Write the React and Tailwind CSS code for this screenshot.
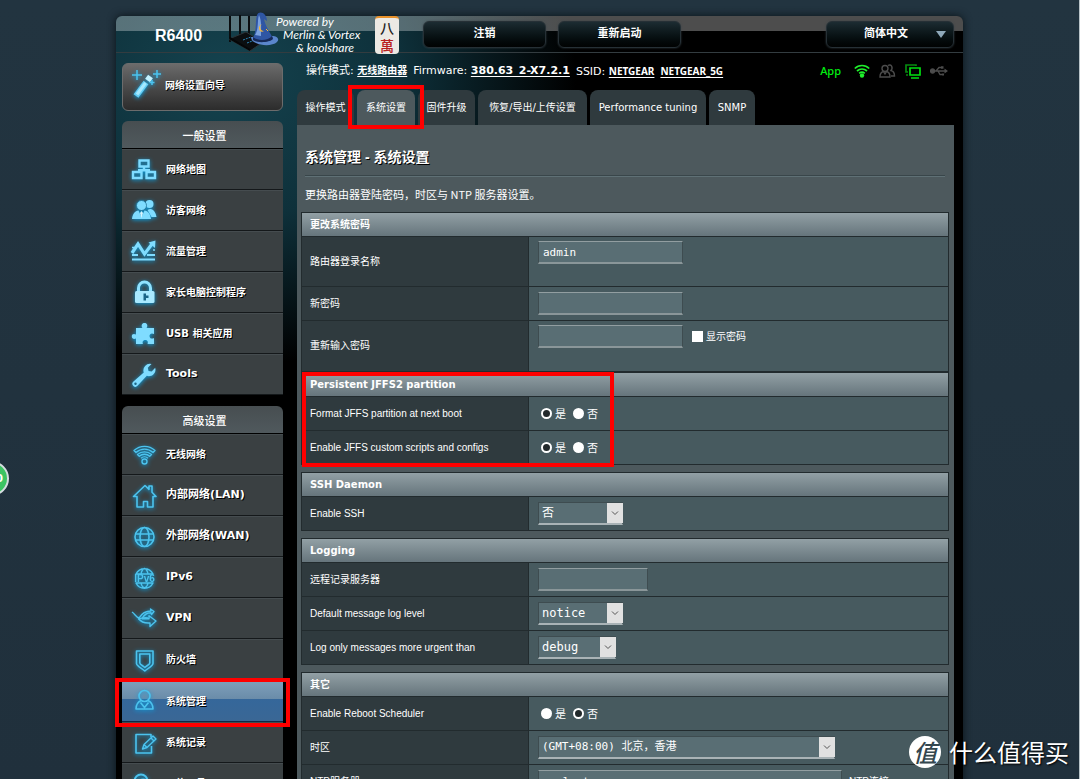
import React, { useState } from 'react';

const iconProps = {
    viewBox: '0 0 28 28',
    fill: 'none',
    stroke: '#4cc3ee',
    strokeWidth: 1.6,
    strokeLinejoin: 'round',
    className: 'w-7 h-7 shrink-0 drop-shadow-[0_1px_2px_#0a9fe0]',
    'aria-hidden': true,
};

const icons = {
    map: (
        <svg {...iconProps} strokeWidth="2.4" stroke="#7fdcff" strokeLinejoin="miter">
            <path d="M9.500 4.500h9v6h-9zM3 16h8.500v6H3zM16.500 16H25v6h-8.500zM8 14.200h12M14 11v3" />
        </svg>
    ),
    guest: (
        <svg {...iconProps} fill="#7fdcff" stroke="none">
            <circle cx="19.500" cy="7" r="4" />
            <path d="M17.500 13c5-3 8 2 9 7h-5z" />
            <circle cx="11.500" cy="8.500" r="5" stroke="#1f6f93" strokeWidth=".8" />
            <path d="M2 22c.500-5 3-8 6.500-8.500L11.500 20l3-6.500C18 14 20.500 17 21 22z" />
            <path d="M11.500 14l1.500 2-1.500 5-1.500-5z" fill="#d9f6ff" />
        </svg>
    ),
    traffic: (
        <svg {...iconProps} stroke="#7fdcff" strokeLinejoin="miter">
            <path d="M2 15l6-9 6.500 10L22 6" strokeWidth="3.200" />
            <path d="M18.500 4.500l7-2-.5 7.500z" fill="#7fdcff" stroke="none" />
            <path d="M2 17h6M17 17h8M2 21.500h23" strokeWidth="1.800" />
            <path d="M2 9.500h2M23 12h2" strokeWidth="1.400" />
        </svg>
    ),
    lock: (
        <svg {...iconProps} stroke="#8fe2ff">
            <path d="M8.500 13V9a6 6 0 0 1 12 0v4" strokeWidth="3" />
            <rect x="5" y="12" width="19.500" height="12" rx="1.500" fill="#a8e9ff" stroke="none" />
            <path d="M13.500 14.500h2.500v7h-2.500zM16 16.500h2.500v2.500H16z" fill="#1b6688" stroke="none" />
        </svg>
    ),
    puzzle: (
        <svg {...iconProps} fill="#7fdcff" stroke="none">
            <path d="M6 8h6.500c-1.600-2.200-.8-5 2-5s3.600 2.800 2 5H24v6c-2.300-1.300-4.500-.3-4.500 2s2.200 3.300 4.500 2v6h-6.500c1-2.400-.2-4-2.200-4s-3.400 1.600-2.300 4H6v-5.500c-2 1-4.200.2-4.200-2.200S4 13.500 6 14.600z" />
        </svg>
    ),
    wrench: (
        <svg {...iconProps} fill="#7fdcff" stroke="none">
            <path d="M25.500 8.500a6.500 6.500 0 0 1-8.700 6.300L7.500 24.800a2.900 2.900 0 0 1-4.300-4L13.800 11.500A6.500 6.500 0 0 1 21.500 3l-3.700 3.700.7 3.200 3.200.7L25.200 6.800z" />
            <circle cx="5.500" cy="22.700" r="1.200" fill="#1b6688" />
        </svg>
    ),
    wifi: (
        <svg {...iconProps} strokeWidth="1.400">
            <path d="M4 9.500c6-5.500 15-5.500 21 0l-2 2c-5-4.500-12-4.500-17 0zM7.500 13.500c4-3.500 10-3.500 14 0l-1.800 1.800c-3-2.700-7.400-2.700-10.400 0zM11 17.200c2-1.800 5-1.800 7 0" />
            <circle cx="14.500" cy="20.500" r="2.500" />
        </svg>
    ),
    house: (
        <svg {...iconProps}>
            <path d="M3.500 14.500L15 3.500l4 3.800V4h3v6.200l4 4.300h-3V25h-5.500v-5.500h-4V25H7V14.500z" />
        </svg>
    ),
    globe: (
        <svg {...iconProps}>
            <circle cx="14.500" cy="14" r="9.500" />
            <ellipse cx="14.500" cy="14" rx="4.500" ry="9.500" />
            <path d="M5.500 11h18M5.500 17h18" />
        </svg>
    ),
    ipv6: (
        <svg {...iconProps} strokeWidth="1.400">
            <path d="M6 10a9.500 9.500 0 0 1 17 0zM6 19a9.500 9.500 0 0 0 17 0zM11 10c.5-3 2-5 3.500-5.500 1.500.5 3 2.500 3.500 5.500M11 19c.5 3 2 4.500 3.500 5 1.500-.5 3-2 3.500-5" />
            <text x="14.500" y="18" textAnchor="middle" fontSize="10" fontFamily="Liberation Sans" fontWeight="700" fill="#4cc3ee" stroke="none">
                IPv6
            </text>
        </svg>
    ),
    vpn: (
        <svg {...iconProps} strokeWidth="1.400">
            <path d="M2 7c3 2 4 5 7 6 3-5 7-7 12-7l-.5-2 3.500 2.500-2.500 3-.500-1.800c-4 0-7 2-9 6h7v-3l7 5.300-6 5.500v-3.500c-6 .5-9-1-11.500-4.500" />
            <path d="M8 14c4-1 7-2 10-1" />
        </svg>
    ),
    shield: (
        <svg {...iconProps}>
            <path d="M6.500 5h16.500v12.500c0 2.500-5 4.500-8.200 7.500-3.300-3-8.300-5-8.300-7.500z" />
            <path d="M9.800 8h10v9c0 1.500-3 2.500-5 4.500-2-2-5-3-5-4.500z" />
        </svg>
    ),
    admin: (
        <svg {...iconProps}>
            <circle cx="14.500" cy="9" r="5.500" />
            <path d="M11 13.500c-3 1.500-5 4.500-5 8.500h17c0-4-2-7-5-8.500M10.500 15.500l4 5 4-5" />
        </svg>
    ),
    log: (
        <svg {...iconProps}>
            <path d="M21 8V5.500H6v18.500h15.500V17" />
            <path d="M12.500 20l1.500-4.500L23 7l3 3-9 8.500zM21 9l3 3M14 15.500l3 3" strokeWidth="1.400" />
        </svg>
    ),
    tools: (
        <svg {...iconProps} strokeWidth="2">
            <circle cx="11" cy="11" r="6.500" />
            <path d="M7 13c2-3 5-4 9-3M16 16l8 8" />
        </svg>
    ),
};

const generalMenu = [
    { icon: 'map', label: '网络地图' },
    { icon: 'guest', label: '访客网络' },
    { icon: 'traffic', label: '流量管理' },
    { icon: 'lock', label: '家长电脑控制程序' },
    { icon: 'puzzle', label: 'USB 相关应用' },
    { icon: 'wrench', label: 'Tools', large: true },
];

const advancedMenu = [
    { icon: 'wifi', label: '无线网络' },
    { icon: 'house', label: '内部网络(LAN)', large: true },
    { icon: 'globe', label: '外部网络(WAN)', large: true },
    { icon: 'ipv6', label: 'IPv6', large: true },
    { icon: 'vpn', label: 'VPN', large: true },
    { icon: 'shield', label: '防火墙' },
    { icon: 'admin', label: '系统管理', active: true },
    { icon: 'log', label: '系统记录' },
    { icon: 'tools', label: '网络工具' },
];

const tabs = [
    { label: '操作模式', width: 'w-[57px]' },
    { label: '系统设置', width: 'w-[58px]', active: true },
    { label: '固件升级', width: 'w-[57px]' },
    { label: '恢复/导出/上传设置', width: 'w-[109px]' },
    { label: 'Performance tuning', width: 'w-[116px]' },
    { label: 'SNMP', width: 'w-[46px]' },
];

const Menu = ({ title, items }) => (
    <nav className="mb-[11px]">
        <h2 className="h-7 pt-1 pl-1 text-center text-[11px] leading-6 font-medium text-white rounded-t-md bg-gradient-to-b from-[#474e51] to-[#50595d] border-b border-black">
            {title}
        </h2>
        <ul>
            {items.map((item) => (
                <li key={item.label} className={item.active ? 'relative mt-px' : ''}>
                    <a
                        href="#"
                        className={`flex items-center gap-2 h-[41px] pl-2 font-bold text-white border-b ${item.large ? 'text-[11px]' : 'text-[10px]'} ${
                            item.active
                                ? 'border-[#0d2a45] bg-[linear-gradient(#7fa0bb,#6a8ca9_45%,#35679a_46%,#3a6795)]'
                                : 'border-[#14181a] border-t border-t-[#454c4f] bg-[#3a4042]'
                        }`}
                    >
                        {icons[item.icon]}
                        <span className="[text-shadow:1px_1px_0_#000]">{item.label}</span>
                    </a>
                    {item.active && <div className="absolute z-10 -inset-x-[7px] -top-[3px] -bottom-[5px] border-4 border-[#f00] pointer-events-none" />}
                </li>
            ))}
        </ul>
    </nav>
);

const Section = ({ title, children, className = '' }) => (
    <table className={`w-full table-fixed border-separate border-spacing-0 border-t border-l border-[#222b2e] ${className}`}>
        <colgroup>
            <col className="w-[227px]" />
            <col />
        </colgroup>
        <thead>
            <tr>
                <th
                    colSpan={2}
                    className="h-6 pl-2 text-left font-['DejaVu_Sans','Noto_Sans_CJK_SC',sans-serif] text-[10px] leading-4 font-bold text-white border-b border-r border-[#222b2e] bg-gradient-to-b from-[#92a0a5] to-[#66757c]"
                >
                    {title}
                </th>
            </tr>
        </thead>
        <tbody>{children}</tbody>
    </table>
);

const Row = ({ label, htmlFor, height = 'h-[34px]', align = 'align-middle', children }) => (
    <tr>
        <th
            scope="row"
            className={`${height} pl-2 text-left text-[10px] leading-4 font-normal text-white border-b border-r border-[#222b2e] bg-[#2f3a3e]`}
        >
            {htmlFor ? <label htmlFor={htmlFor}>{label}</label> : label}
        </th>
        <td className={`${align} py-1 pl-[9px] border-b border-r border-[#222b2e] bg-[#475a5f]`}>
            <div className="flex items-center">{children}</div>
        </td>
    </tr>
);

const TextInput = ({ width = 'w-[145px]', ...props }) => (
    <input
        {...props}
        className={`${width} h-[23px] pl-1 font-['DejaVu_Sans_Mono',monospace] text-[11px] text-white bg-[#596e74] border border-[#3e4c50] border-t-[#929ea1] border-b-2 border-b-[#8a9699] outline-none`}
    />
);

const Select = ({ id, value, width, size = 'text-[12px]' }) => (
    <div className={`relative ${width}`}>
        <select
            id={id}
            defaultValue={value}
            className={`block w-full h-[23px] pl-[3px] appearance-none font-['DejaVu_Sans_Mono','Noto_Sans_CJK_SC',monospace] ${size} leading-4 text-white bg-[#596e74] border border-[#3e4c50] border-b-2 border-b-[#a9b3b6] outline-none`}
        >
            <option>{value}</option>
        </select>
        <span className="absolute right-0 top-px flex items-center justify-center w-4 h-5 bg-[#e1e1e1] pointer-events-none">
            <svg viewBox="0 0 8 8" className="w-2 h-2" fill="none" stroke="#555">
                <path d="M1 2.500l3 3 3-3" />
            </svg>
        </span>
    </div>
);

const YesNo = ({ name, initial }) => {
    const [value, setValue] = useState(initial);

    return ['是', '否'].map((option) => (
        <label key={option} className="flex items-center gap-[3px] ml-[3px] mr-1 text-[11px] leading-4 text-white">
            <input
                type="radio"
                name={name}
                checked={value === option}
                onChange={() => setValue(option)}
                className="appearance-none w-[11px] h-[11px] rounded-full bg-white checked:bg-[#22292b] checked:border-2 checked:border-white"
            />
            {option}
        </label>
    ));
};

const RouterLogo = () => (
    <svg viewBox="0 0 52 40" className="w-[52px] h-10" aria-hidden="true">
        <g stroke="#0a0d0f" strokeWidth="2">
            <path d="M2 4v26M12 3v22M21 4v18" />
        </g>
        <path d="M1 27l17-7 17 10-13 9z" fill="#0b0e10" stroke="#2c3438" />
        <path d="M1 27l21 12v-2L2 25z" fill="#050607" />
        <path d="M15 28l8-3M19 31l8-3" stroke="#2d86b8" strokeDasharray="2 1" />
        <path d="M23 25c0 3 2 5 5 6 6 3 17 3 21-1 3-3 0-6-5-6z" fill="#5b86cc" />
        <path d="M25 26c4-7 2-17 4-23 1-3 4-3 6-2 3 2 4 5 4 8l-3-2c1 6 5 12 9 19-3 5-16 5-20 0z" fill="#2f56a4" />
        <path d="M27 23c4-6 2-14 4-20 3 6 2 15 2 21z" fill="#7ba2e0" />
        <path d="M25 25c4 4 15 4 19-1l1 3c-4 4-17 4-20 1z" fill="#172a58" />
        <path d="M34 12c-3 2-2 7 2 7-4 3-8-4-2-7z" fill="#f0b73f" />
        <path d="M38 17l2 2" stroke="#f0b73f" />
    </svg>
);

const WandIcon = () => (
    <svg viewBox="0 0 34 32" className="w-[34px] h-8 shrink-0 drop-shadow-[0_1px_2px_#0a9fe0]" fill="none" aria-hidden="true">
        <path d="M5 27L15 13.500" stroke="#63cdf5" strokeWidth="6" />
        <path d="M6 25.500L14.500 14" stroke="#a5e9ff" strokeWidth="3" />
        <path d="M16.500 11.500l3-4" stroke="#c4f2ff" strokeWidth="6" />
        <path d="M6 1v10M1 6h10M26 1v8M22 5h8M21 11v5M18.500 13.500h5" stroke="#4cc3ee" strokeWidth="1.500" />
    </svg>
);

const StatusIcons = () => (
    <div className="flex items-center gap-[9px]">
        <a href="#" className="mr-1 text-[11px] leading-4 font-['Noto_Sans',sans-serif] font-medium text-[#00f010]">App</a>
        <svg viewBox="0 0 16 14" className="w-4 h-[14px]" fill="none" stroke="#1ff02c" strokeWidth="1.700">
            <path d="M.8 4.500c4-4 10.400-4 14.400 0M3 7c3-2.700 7-2.700 10 0M5.200 9.300c1.800-1.500 3.800-1.500 5.600 0" />
            <circle cx="8" cy="11.500" r="2.200" fill="#1ff02c" stroke="none" />
        </svg>
        <svg viewBox="0 0 17 14" className="w-[17px] h-[14px]" fill="none" stroke="#4c4c4c" strokeWidth="1.400">
            <circle cx="6" cy="4.500" r="3" />
            <path d="M1 13c0-3 1.500-5 3.500-5.500L6 10l1.500-2.500C9.500 8 11 10 11 13zM9 1.500c3-2 5.500 2 3 5 2 .5 3.500 3 3.500 5.500H12" />
        </svg>
        <svg viewBox="0 0 16 15" className="w-4 h-[15px]" fill="none" stroke="#00e010" strokeWidth="1.700">
            <path d="M11 2V1H1v7h2M1 11h2" stroke="#078a10" />
            <path d="M5 4h10v7H5zM6 14h8" />
        </svg>
        <svg viewBox="0 0 18 12" className="w-[18px] h-3" fill="none" stroke="#4c4c4c" strokeWidth="1.300">
            <path d="M3 6h12M6 6l3-3.500h2M8 6l2 3.500h2" />
            <circle cx="2.500" cy="6" r="2" fill="#4c4c4c" />
            <path d="M14.500 3.500v5L18 6zM11 1.200h2.500v2.500H11zM12 8.500h2v2h-2z" fill="#4c4c4c" stroke="none" />
        </svg>
    </div>
);

const headerButton =
    'h-[27px] rounded-md border border-[#263036] bg-gradient-to-b from-[#1c2c32] to-[#010303] text-center text-[11px] font-bold text-white shadow-[0_0_2px_#39454a]';

const App = () => {
    const [showPassword, setShowPassword] = useState(false);

    return (
        <div className="relative h-screen overflow-hidden border-r border-[#b9c4c9] bg-gradient-to-b from-[#223440] to-[#20303c] pt-4 font-['DejaVu_Sans','Noto_Sans_CJK_SC',sans-serif]">
            <div className="mx-auto max-w-[847px] min-h-screen rounded-t-md bg-black bg-[radial-gradient(ellipse_350px_290px_at_110px_60px,#15434f_0%,#0e303a_50%,transparent_100%)] bg-no-repeat shadow-[0_0_8px_#0a1216]">
                <header className="flex items-start h-[37px] border-b border-[#333c40] rounded-t-md bg-[linear-gradient(#ffffff4d,#ffffff4d)] bg-[length:100%_15px] bg-no-repeat">
                    <h1 className="w-[112px] pt-2 pl-[39px] text-[16px] leading-6 font-bold text-white font-['Liberation_Sans',sans-serif]">R6400</h1>
                    <div className="-mt-1">
                        <RouterLogo />
                    </div>
                    <p className="w-[92px] -ml-1 -mt-px text-[12px] leading-[13px] italic text-white font-['Lato',sans-serif] whitespace-nowrap">
                        <span className="block">Powered by</span>
                        <span className="block pl-[7px]">Merlin &amp; Vortex</span>
                        <span className="block pl-5">&amp; koolshare</span>
                    </p>
                    <div className="flex flex-col items-center w-6 h-[38px] ml-[7px] rounded-sm bg-[#ece9e4] border-t-2 border-[#e8912a] text-[14px] leading-[18px] font-medium font-['Noto_Sans_CJK_SC',sans-serif]">
                        <span className="text-[#222]">八</span>
                        <span className="text-[#b8201c]">萬</span>
                    </div>
                    <button type="button" className={`${headerButton} mt-[5px] ml-6 w-[123px]`}>注销</button>
                    <button type="button" className={`${headerButton} mt-[5px] ml-3 w-[123px]`}>重新启动</button>
                    <div className="relative mt-[5px] ml-auto mr-[9px]">
                        <select aria-label="语言" className={`${headerButton} block w-[128px] appearance-none [text-align-last:center] pr-2`}>
                            <option>简体中文</option>
                        </select>
                        <span className="absolute right-2 top-[10px] border-x-[5px] border-t-[7px] border-x-transparent border-t-[#8fa9ba] pointer-events-none" />
                    </div>
                </header>

                <div className="flex">
                    <aside className="w-[161px] ml-[6px] mr-[14px] mt-[10px] shrink-0">
                        <button
                            type="button"
                            className="flex items-center w-full h-12 mb-[10px] pl-2 pb-1 rounded-md border border-[#6c6c6c] bg-gradient-to-b from-[#6b6b6b] to-[#2c2c2c] text-[10px] font-bold text-white"
                        >
                            <WandIcon />
                            <span className="[text-shadow:1px_1px_0_#000]">网络设置向导</span>
                        </button>
                        <Menu title="一般设置" items={generalMenu} />
                        <Menu title="高级设置" items={advancedMenu} />
                    </aside>

                    <main className="flex-1 min-w-0 mr-[9px]">
                        <div className="flex items-center justify-between h-9 pl-[9px] pr-[6px]">
                            <p className="flex items-center gap-[6px] text-[11px] leading-4 text-white whitespace-nowrap">
                                <span>操作模式: <a href="#" className="text-[10px] font-bold underline underline-offset-2">无线路由器</a></span>
                                <span>Firmware: <a href="#" className="font-bold underline underline-offset-2">380.63_2-X7.2.1</a></span>
                                <span>SSID: <b className="font-['Noto_Sans',sans-serif] text-[10px] underline underline-offset-2">NETGEAR</b></span>
                                <b className="font-['Noto_Sans',sans-serif] text-[10px] underline underline-offset-2">NETGEAR_5G</b>
                            </p>
                            <StatusIcons />
                        </div>

                        <div className="flex gap-[3px] pt-px">
                            {tabs.map((tab) => (
                                <div key={tab.label} className="relative">
                                    <a
                                        href="#"
                                        className={`flex items-center justify-center h-[35px] rounded-t-lg text-[10px] text-white whitespace-nowrap ${tab.width} ${tab.active ? 'bg-[#4d595d]' : 'bg-[#2f3a3e]'}`}
                                    >
                                        {tab.label}
                                    </a>
                                    {tab.active && <div className="absolute z-10 -inset-x-[9px] -top-[5px] -bottom-1 border-4 border-[#f00] pointer-events-none" />}
                                </div>
                            ))}
                        </div>

                        <div className="min-h-screen bg-[#4d595d] px-[5px] pt-5 pl-1 text-white">
                            <h2 className="mx-1 pb-[6px] text-[14px] leading-6 font-bold font-['Liberation_Sans','Noto_Sans_CJK_SC',sans-serif] border-b border-[#39464a] shadow-[0_1px_0_#5f7075] [text-shadow:1px_1px_0_#000]">
                                系统管理 - 系统设置
                            </h2>
                            <p className="mx-1 pt-[6px] pb-[6px] text-[11px] leading-6 font-['Noto_Sans_CJK_SC',sans-serif]">
                                更换路由器登陆密码，时区与 NTP 服务器设置。
                            </p>

                            <form className="font-['Liberation_Sans','Noto_Sans_CJK_SC',sans-serif]" onSubmit={(e) => e.preventDefault()}>
                                <Section title="更改系统密码">
                                    <Row label="路由器登录名称" htmlFor="username" height="h-[50px]" align="align-top">
                                        <TextInput id="username" type="text" defaultValue="admin" />
                                    </Row>
                                    <Row label="新密码" htmlFor="password">
                                        <TextInput id="password" type={showPassword ? 'text' : 'password'} />
                                    </Row>
                                    <Row label="重新输入密码" htmlFor="password2" height="h-[51px]" align="align-top">
                                        <TextInput id="password2" type={showPassword ? 'text' : 'password'} />
                                        <label className="flex items-center gap-[3px] ml-[9px] text-[10px] leading-4">
                                            <input
                                                type="checkbox"
                                                checked={showPassword}
                                                onChange={(e) => setShowPassword(e.target.checked)}
                                                className="appearance-none w-[11px] h-[11px] bg-white checked:bg-[#7a8f96] border border-white"
                                            />
                                            显示密码
                                        </label>
                                    </Row>
                                </Section>

                                <div className="relative">
                                    <Section title="Persistent JFFS2 partition">
                                        <Row label="Format JFFS partition at next boot">
                                            <YesNo name="jffs_format" initial="是" />
                                        </Row>
                                        <Row label="Enable JFFS custom scripts and configs">
                                            <YesNo name="jffs_scripts" initial="是" />
                                        </Row>
                                    </Section>
                                    <div className="absolute left-px top-0 -bottom-[2px] w-[312px] border-4 border-[#f00] pointer-events-none" />
                                </div>

                                <Section title="SSH Daemon" className="mt-[7px]">
                                    <Row label="Enable SSH" htmlFor="ssh">
                                        <Select id="ssh" value="否" width="w-[85px]" />
                                    </Row>
                                </Section>

                                <Section title="Logging" className="mt-[7px]">
                                    <Row label="远程记录服务器" htmlFor="log_server">
                                        <TextInput id="log_server" type="text" width="w-[110px]" />
                                    </Row>
                                    <Row label="Default message log level" htmlFor="log_level">
                                        <Select id="log_level" value="notice" width="w-[85px]" />
                                    </Row>
                                    <Row label="Log only messages more urgent than" htmlFor="log_urgent">
                                        <Select id="log_urgent" value="debug" width="w-[78px]" />
                                    </Row>
                                </Section>

                                <Section title="其它" className="mt-[7px]">
                                    <Row label="Enable Reboot Scheduler">
                                        <YesNo name="reboot" initial="否" />
                                    </Row>
                                    <Row label="时区" htmlFor="timezone">
                                        <Select id="timezone" value="(GMT+08:00) 北京，香港" width="w-[297px]" size="text-[11px]" />
                                    </Row>
                                    <Row label="NTP服务器" htmlFor="ntp">
                                        <TextInput id="ntp" type="text" defaultValue="pool.ntp.org" width="w-[304px]" />
                                        <a href="#" className="ml-[7px] text-[10px] leading-4">NTP连接</a>
                                    </Row>
                                </Section>
                            </form>
                        </div>
                    </main>
                </div>
            </div>

            <div className="absolute -left-[26px] top-[461px] flex items-center justify-end w-[35px] h-[35px] pr-1 rounded-full border-2 border-[#d5dde0] bg-[#3cc463] text-[10px] font-bold text-white">
                0
            </div>

            <div className="absolute right-[10px] bottom-[11px] flex items-center gap-2 text-white font-['Noto_Sans_CJK_SC',sans-serif]">
                <span className="flex items-center justify-center w-8 h-8 rounded-full bg-white text-[24px] leading-8 italic font-medium text-[#34474f]">值</span>
                <span className="text-[24px] leading-8 [text-shadow:1px_1px_2px_#000]">什么值得买</span>
            </div>
        </div>
    );
};

export default App;
